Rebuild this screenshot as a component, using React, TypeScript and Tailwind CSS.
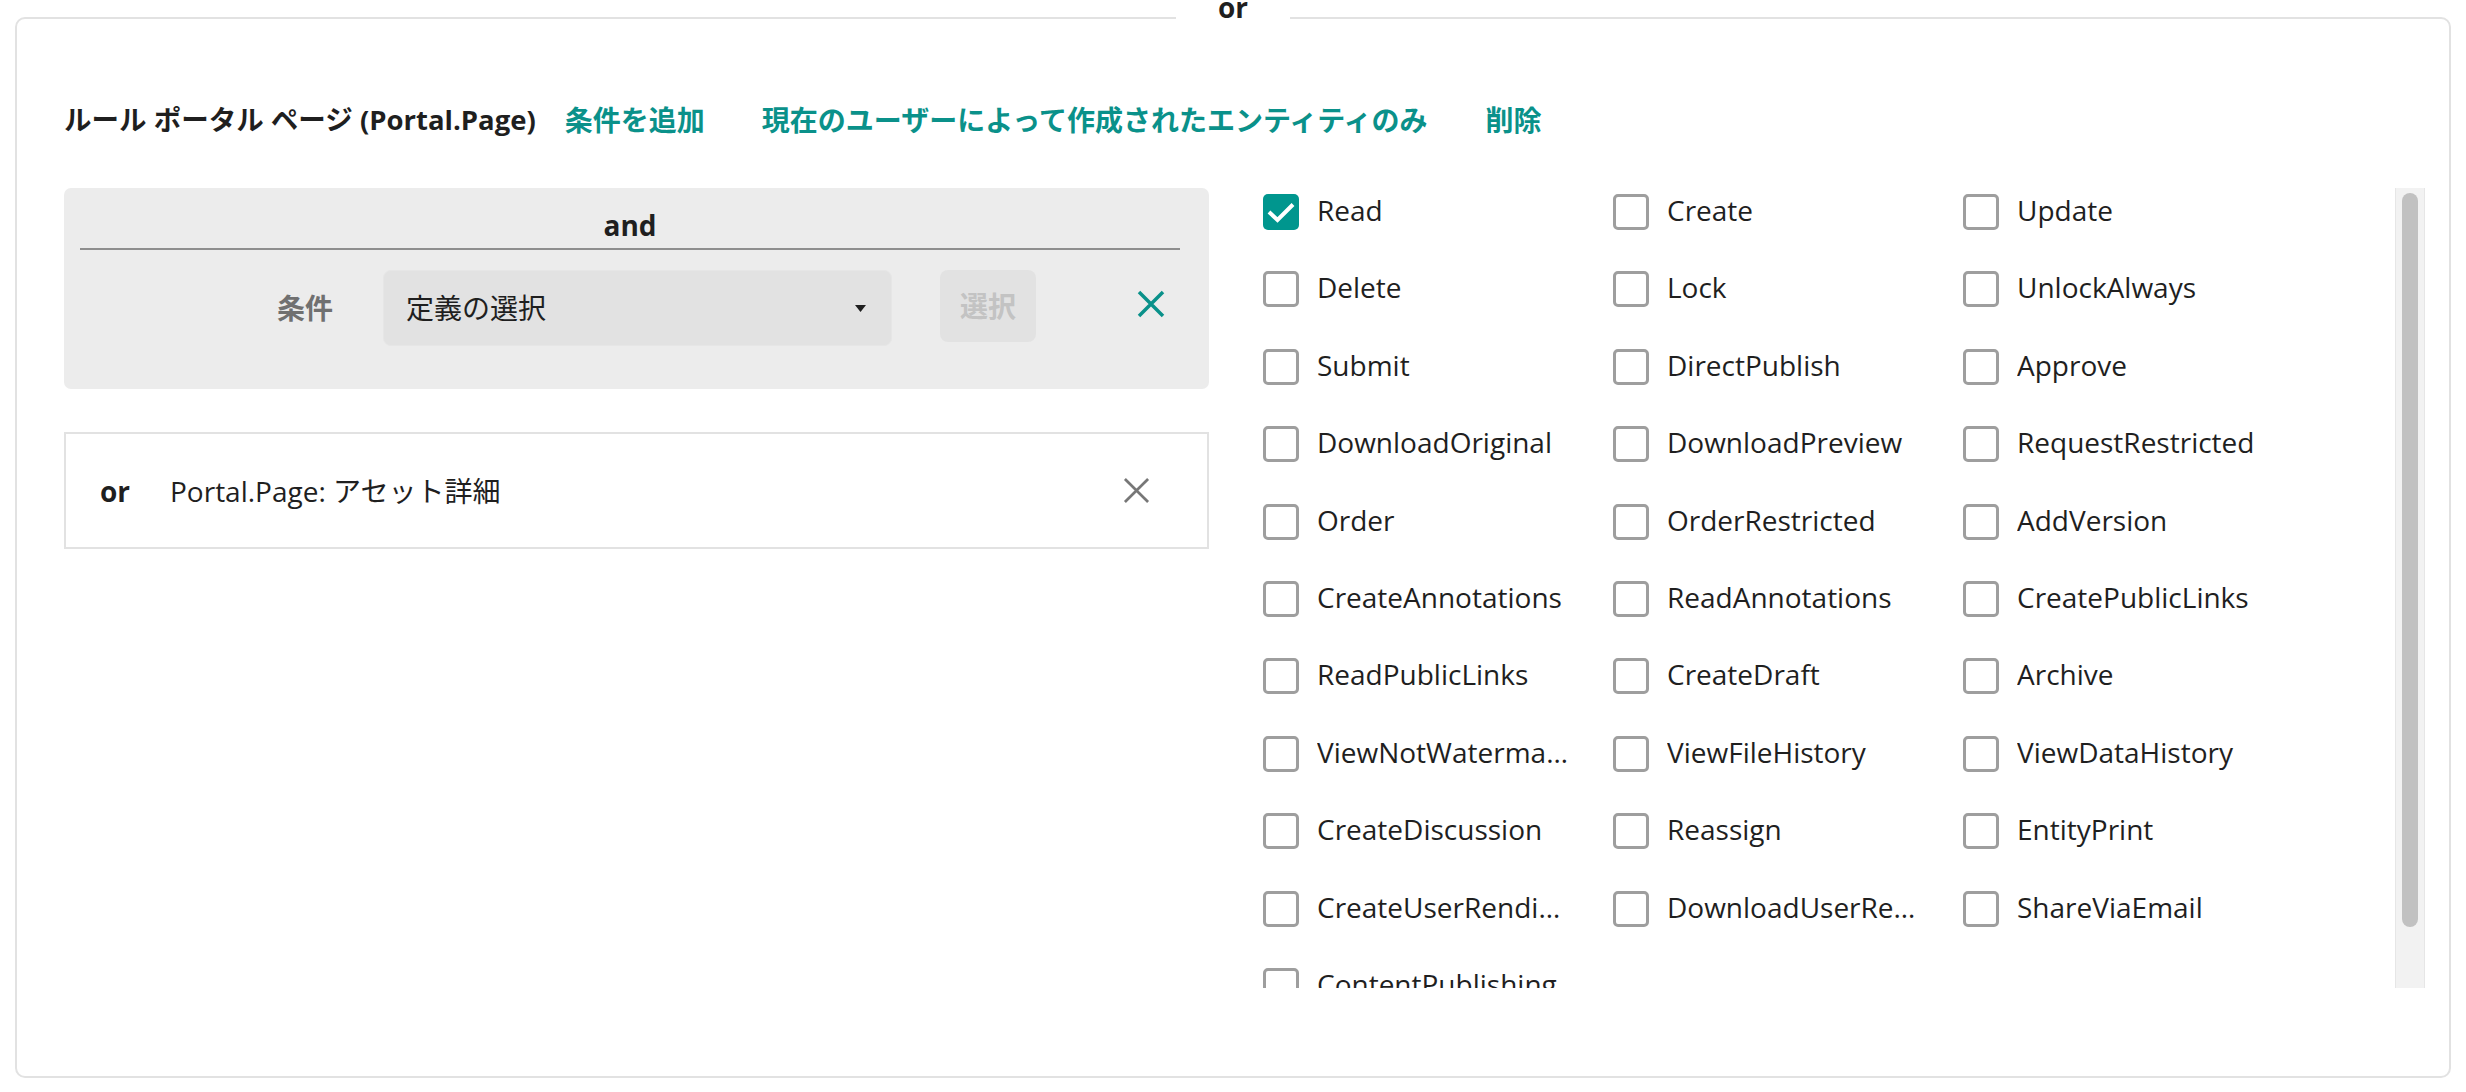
const permissions: { name: string; checked?: boolean }[] = [
  { name: "Read", checked: true },
  { name: "Create" },
  { name: "Update" },
  { name: "Delete" },
  { name: "Lock" },
  { name: "UnlockAlways" },
  { name: "Submit" },
  { name: "DirectPublish" },
  { name: "Approve" },
  { name: "DownloadOriginal" },
  { name: "DownloadPreview" },
  { name: "RequestRestricted" },
  { name: "Order" },
  { name: "OrderRestricted" },
  { name: "AddVersion" },
  { name: "CreateAnnotations" },
  { name: "ReadAnnotations" },
  { name: "CreatePublicLinks" },
  { name: "ReadPublicLinks" },
  { name: "CreateDraft" },
  { name: "Archive" },
  { name: "ViewNotWatermarked" },
  { name: "ViewFileHistory" },
  { name: "ViewDataHistory" },
  { name: "CreateDiscussion" },
  { name: "Reassign" },
  { name: "EntityPrint" },
  { name: "CreateUserRenditions" },
  { name: "DownloadUserRenditions" },
  { name: "ShareViaEmail" },
  { name: "ContentPublishing" },
];

function CloseIcon({ size, color, stroke }: { size: number; color: string; stroke: number }) {
  return (
    <svg width={size} height={size} viewBox="0 0 28 28" fill="none">
      <path d="M2 2L26 26M26 2L2 26" stroke={color} strokeWidth={stroke} />
    </svg>
  );
}

function Checkbox({ checked }: { checked?: boolean }) {
  if (checked) {
    return (
      <span className="w-[36px] h-[36px] shrink-0 rounded-[5px] bg-[#00968e] flex items-center justify-center">
        <svg width="36" height="36" viewBox="0 0 36 36" fill="none">
          <path d="M6 18L14.5 26L30 10.5" stroke="#fff" strokeWidth="4" />
        </svg>
      </span>
    );
  }
  return <span className="w-[36px] h-[36px] shrink-0 rounded-[5px] border-[3px] border-[#9e9e9e] bg-white" />;
}

export default function App() {
  return (
    <div className="min-h-screen bg-white pt-[17px] px-[15px] font-['Open_Sans','Noto_Sans_CJK_JP',sans-serif] text-[28px] text-[#1f1f1f]">
      <div className="relative h-[1061px] border-2 border-[#e2e2e2] rounded-[10px] pt-[81px] pl-[47px] pr-[24px]">
        {/* legend */}
        <span className="absolute left-1/2 -translate-x-1/2 top-[-26px] w-[114px] bg-white text-center text-[28px] font-bold leading-none">
          or
        </span>

        {/* header */}
        <div className="h-[40px] flex items-center font-bold whitespace-nowrap">
          <span className="text-[27.5px]">ルール ポータル ページ (Portal.Page)</span>
          <span className="ml-[29px] text-[#0a918a]">条件を追加</span>
          <span className="ml-[57px] text-[#0a918a]">現在のユーザーによって作成されたエンティティのみ</span>
          <span className="ml-[58px] text-[#0a918a]">削除</span>
        </div>

        <div className="mt-[48px] h-[800px] flex">
          {/* left column */}
          <div className="w-[1145px] shrink-0">
            <div className="h-[201px] bg-[#ececec] rounded-[7px]">
              <div className="ml-[16px] mr-[29px] h-[62px] border-b-2 border-[#8e8e8e] flex items-end justify-center pb-[6px] font-bold leading-[34px]">
                and
              </div>
              <div className="mt-[20px] h-[76px] flex items-center pl-[16px]">
                <span className="w-[253px] text-right font-bold text-[#707070]">条件</span>
                <div className="ml-[50px] w-[509px] h-[76px] rounded-[8px] bg-[#e2e2e2] border border-[#e6e6e6] flex items-center pl-[22px] pr-[25px]">
                  <span className="flex-1">定義の選択</span>
                  <svg width="11" height="7" viewBox="0 0 11 7">
                    <path d="M0 0H11L5.5 7Z" fill="#1f1f1f" />
                  </svg>
                </div>
                <div className="ml-[48px] w-[96px] h-[72px] self-start rounded-[8px] bg-[#e2e2e2] flex items-center justify-center font-bold text-[#c3c3c3]">
                  選択
                </div>
                <div className="ml-[101px] -mt-[9px]">
                  <CloseIcon size={28} color="#0a918a" stroke={3.5} />
                </div>
              </div>
            </div>

            <div className="mt-[43px] h-[117px] border-2 border-[#e2e2e2] flex items-center pl-[34px] pr-[57px]">
              <span className="w-[70px] font-bold">or</span>
              <span className="flex-1">Portal.Page: アセット詳細</span>
              <CloseIcon size={27} color="#777777" stroke={2.8} />
            </div>
          </div>

          {/* right column */}
          <div className="flex-1 flex pl-[54px] h-full">
            <div className="flex-1 overflow-hidden pt-[6px]">
              <div className="grid grid-cols-[repeat(3,350px)] auto-rows-[36px] gap-y-[41.4px]">
                {permissions.map((p) => (
                  <div key={p.name} className="flex items-center gap-[18px]">
                    <Checkbox checked={p.checked} />
                    <span className="w-[252px] truncate leading-[40px] mb-[4px]">{p.name}</span>
                  </div>
                ))}
              </div>
            </div>
            <div className="w-[30px] h-full bg-[#f2f2f2] border-x border-[#e6e6e6] pt-[5px]">
              <div className="mx-auto w-[16px] h-[734px] rounded-full bg-[#c1c1c1]" />
            </div>
          </div>
        </div>
      </div>
    </div>
  );
}
